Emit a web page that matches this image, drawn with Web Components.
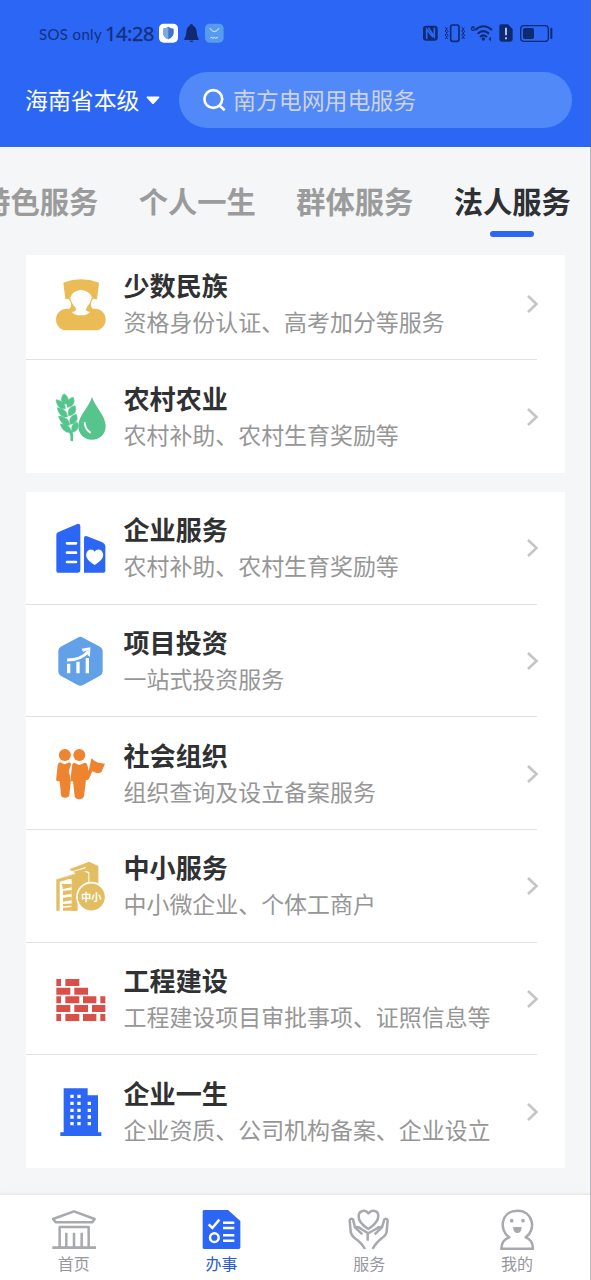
<!DOCTYPE html>
<html lang="zh-CN">
<head>
<meta charset="utf-8">
<title>办事</title>
<style>
html,body{margin:0;padding:0;height:100%;overflow:hidden;background:#f4f6f8}
body{font-family:"Noto Sans CJK SC",sans-serif}
</style>
</head>
<body>
<service-app></service-app>
<script>
const define=(name,html)=>customElements.define(name,class extends HTMLElement{
  constructor(){super();const t=document.createElement('template');t.innerHTML=typeof html==='function'?html(this):html;this.attachShadow({mode:'open'}).append(t.content.cloneNode(true));}
});

const glyphs={
minority:`<g fill="#ebbb55"><path d="M23 11Q76-9 130 11L124 61L114 60L107 52Q102 37 76 34Q50 37 46 52L39 61L29 60Z"/><rect x="1" y="89" width="149" height="65" rx="32.500"/></g><path d="M76 33Q100 35 103 54Q99 76 91 84V94Q97 99 103 99Q94 110 76 109Q57 110 49 99Q57 99 61 94V84Q52 76 47 56Q51 36 76 33Z" fill="#fff"/><path d="M43 53Q46 72 61 87L56 96L41 89Q54 79 38 58ZM109 53Q105 72 92 87L98 96L111 89Q99 79 113 58Z" fill="#ebbb55"/>`,
farm:`<g fill="#55c48d"><path d="M109 14C116 42 150 70 150 102C150 127 132 143 109 143C86 143 68 127 68 102C68 70 103 42 109 14Z"/><path stroke="#55c48d" stroke-width="1.500" d="M25 5C41 15 41 29 31 37C15 33 13 17 25 5ZM1 23C18 25 30 34 29 50C13 52 3 42 1 23ZM5 47C23 49 36 58 35 75C18 76 8 66 5 47ZM9 72C28 74 42 82 42 100C24 101 13 91 9 72ZM14 96C33 96 46 104 48 122C31 123 18 114 14 96ZM53 16C60 33 51 45 35 46C31 31 36 20 53 16ZM58 41C65 58 56 70 39 71C35 55 41 44 58 41ZM62 67C69 83 61 96 44 97C39 81 46 70 62 67ZM65 91C72 106 65 119 50 121C45 106 50 94 65 91Z"/></g><path d="M44 117Q51 130 48 147" fill="none" stroke="#55c48d" stroke-width="8"/><path d="M87 93Q89 112 103 121" fill="none" stroke="#fff" stroke-width="6" stroke-linecap="round"/>`,
company:`<g fill="#2b66f5"><path d="M2 36Q2 30 7 28L65 3Q74 0 74 10V142Q74 149 67 149H7Q2 149 2 143Z"/><path d="M85 46Q85 37 94 40L140 58Q149 62 149 70V144Q149 149 143 149H85Z"/></g><path d="M34 61H61M34 89H61M34 117H61" stroke="#fff" stroke-width="8" stroke-linecap="round"/><path d="M117 126C94 112 87 99 94 87C101 76 112 79 117 86C122 79 134 76 140 87C147 99 140 112 117 126Z" fill="#fff"/>`,
invest:`<path d="M66 5Q74 0 82 5L133 32Q141 37 141 46V106Q141 115 133 119L82 147Q74 151 66 147L15 119Q8 115 8 106V46Q8 37 15 32Z" fill="#62a1e8"/><g fill="none" stroke="#fff" stroke-width="10"><path d="M39 83V112M67 77V112M95 66V112"/><path d="M34 72Q77 72 98 46" stroke-width="9"/></g><path d="M78 38L104 34L103 62L95 57L99 43L82 47Z" fill="#fff"/>`,
group:`<g fill="#ef8430"><circle cx="27.500" cy="18" r="18"/><circle cx="71" cy="18" r="18"/><path d="M13 40L27 46L41 40Q48 42 45 50L40 64Q38 73 43 79L45 99L41 138Q39 146 29 146Q17 146 16 138L12 97H4Q0 94 2 86L6 49Q7 42 13 40Z"/><path d="M55 41L71 48L87 41Q94 42 96 52L99 66L107 29H111L113 33Q122 42 148 44L137 70Q124 76 110 67L100 89Q95 96 91 92L85 142Q82 151 71 151Q59 151 57 142L52 97H44L49 50Q50 43 55 41Z"/></g>`,
small:`<g fill="#e3bd61"><path d="M2 55L52 40L62 47V149H48V55L40 54L12 62V149H2Z"/><path d="M18 69H48V79L22 84ZM22 90L48 87V98L22 103ZM22 110L48 107V118L22 122ZM22 129L62 127V149H22V140L48 138V134L22 136Z"/><path d="M41 25L100 2L128 15V73H101V34L92 30L61 38L53 32L90 22V18L49 31Z"/><path d="M53 39L84 31L98 37V68Q84 69 75 80Q67 90 66 106V149H60V48Z"/></g><path d="M2 55L48 44" stroke="#fff" stroke-width="2" opacity=".4"/><circle cx="107" cy="108" r="43" fill="#e3bd61" stroke="#fff" stroke-width="5"/><text x="107" y="119" text-anchor="middle" fill="#fff" font-size="31" font-weight="700" font-family="Noto Sans CJK SC">中小</text>`,
bricks:`<path fill="#db4f49" d="${[[15,[[2,16],[29,71]]],[41,[[2,44],[56,97]]],[67,[[2,16],[29,71],[82,122],[134,149]]],[93,[[2,44],[56,97],[109,149]]],[120,[[2,16],[29,71],[82,122],[134,149]]]].map(([y,r])=>r.map(([a,b])=>`M${a} ${y}H${b}v21H${a}Z`).join('')).join('')}"/>`,
tower:`<path fill="#2b66f5" d="M24 4H96V25H127V136H137V147H14V136H24Z"/><path fill="#fff" d="${[[44,23],[65,23],[44,44],[65,44],[96,44],[44,65],[65,65],[96,65],[44,85],[65,85],[96,85],[44,105],[65,105],[96,105]].map(([x,y])=>`M${x} ${y}h10v10h-10Z`).join('')}"/>`
};

const navGlyphs={
home:`<g fill="none" stroke="#a7a9ae" stroke-width="7.500" stroke-linejoin="round"><path d="M66 4L128 27L121 37H11L3 27Z"/><path d="M23 112V51H110V112M43 68V112M66 68V112M89 68V112"/><path d="M1 113H132" stroke-width="8"/></g>`,
work:`<path d="M12 0H84L121 33V112Q121 117 116 117H12Q8 117 8 112V5Q8 0 12 0Z" fill="#2b66f5"/><g fill="none" stroke="#fff" stroke-width="7.500"><path d="M26 43L37 54L58 29M69 38H103M69 54H103M69 76H103M69 92H103"/><circle cx="43" cy="83" r="13"/></g>`,
care:`<g fill="none" stroke="#a7a9ae" stroke-width="7.500" stroke-linejoin="round" stroke-linecap="butt"><path d="M64 57C42 43 34 30 35 18C36 0 56-2 64 10C74-2 94 0 94 18C94 30 85 43 64 57Z"/><path d="M54 117Q45 100 23 84Q11 75 11 64L8 31Q10 24 18 28L24 52L46 73M25 52Q33 49 43 57L62 69V92M77 117Q85 100 105 84Q119 75 119 64L122 31Q119 24 112 28L105 52L83 73M104 52Q96 49 87 57L65 69"/></g>`,
me:`<path d="M43 82C11 62 17 2 67 2C116 2 124 61 92 82Q114 90 114 116H19Q20 89 43 82Z" fill="none" stroke="#a7a9ae" stroke-width="7.500" stroke-linejoin="round"/><g fill="#a7a9ae"><circle cx="50" cy="32" r="5.500"/><circle cx="84" cy="32" r="5.500"/><path d="M54 51H80Q79 69 67 69Q55 69 54 51Z"/></g>`
};

define('status-bar',`<style>
:host{display:flex;align-items:center;height:67px;padding:0 38px 0 39px;color:#14307e;font-family:Lato,sans-serif;white-space:nowrap}
.sos{font-size:15px;width:66px;letter-spacing:.35px}.time{font:20px/24px "Noto Sans",sans-serif;width:54px;letter-spacing:-.45px;-webkit-text-stroke:.3px #14307e}
.right{margin-left:auto}svg{display:block;margin-top:-2px}
</style><span class="sos">SOS only</span><span class="time">14:28</span>
<svg width="68" height="22" viewBox="0 0 204 66"><rect x="0" y="5" width="57" height="57" rx="14" fill="#fff"/><path d="M28 14Q36 20 44 20V35Q42 45 28 52Q14 45 12 35V20Q20 20 28 14Z" fill="#3f72cb"/><path d="M28 14V52Q14 45 12 35V20Q20 20 28 14Z" fill="#7fa8e6"/><path d="M97 6Q102 6 102 11Q113 16 113 30Q113 44 119 50V54H76V50Q82 44 82 30Q82 16 92 11Q92 6 97 6ZM91 56H104Q98 64 91 56Z" fill="#11296e"/><rect x="138" y="5" width="56" height="57" rx="14" fill="#579bee"/><path d="M152 18Q166 40 181 18M154 48L158 46L162 49L166 46L170 49L176 46" stroke="#e0efff" stroke-width="3" fill="none"/></svg>
<svg class="right" width="131" height="22" viewBox="0 0 393 66"><g fill="none" stroke="#102a72" stroke-width="5"><rect x="3" y="11" width="44" height="45" rx="9" fill="#102a72" stroke="none"/><path d="M14 51V22L33 46M19 17L37 44V17" stroke="#2b66f5" stroke-width="5"/><rect x="86" y="9" width="25" height="49" rx="6"/><path d="M69 16L75 21L69 27L75 33L69 39L75 45L69 51M77 17L73 22L78 28L73 34L78 40L73 46L78 51M119 16L125 21L119 27L125 33L119 39L125 45L119 51M127 17L123 22L128 28L123 34L128 40L123 46L128 51" stroke-width="3"/><path d="M160 24Q184 2 210 24M167 35Q184 20 201 35M174 45Q184 35 195 45" stroke-width="6"/><circle cx="184" cy="51" r="5" fill="#102a72" stroke="none"/><path d="M207 44L200 51L207 58ZM211 46v10" fill="#102a72" stroke="none"/><path d="M237 7H258L272 21V52Q272 59 265 59H239Q232 59 232 52V12Q232 7 237 7Z" fill="#102a72" stroke="none"/><path d="M252 17V40M252 46V52" stroke="#cfdbff"/><rect x="296" y="11" width="83" height="47" rx="10" stroke-width="4"/><rect x="303" y="18" width="33" height="33" rx="5" fill="#102a72" stroke="none"/><path d="M388 20V48" stroke-width="6" stroke-linecap="round"/></g><text x="146" y="28" font-family="Noto Sans" font-weight="700" font-size="23" fill="#102a72">6</text></svg>`);

define('search-box',`<style>
:host{display:flex;align-items:center;width:393px;height:56px;border-radius:28px;background:#5189f8;box-sizing:border-box;padding:0 0 0 24px;color:#cdd2e0;font-size:22.900px;line-height:34px}
svg{margin-right:7px}
span{margin-top:-2px}
</style><svg width="23" height="24" viewBox="0 0 23 24"><g fill="none" stroke="#fff" stroke-width="2.600"><circle cx="10.300" cy="11" r="8.900"/><path d="M16.500 17.500L21.700 22.300"/></g></svg><span><slot></slot></span>`);

define('app-header',`<style>
:host{display:block;height:147px;background:#2b66f5;color:#fff}
.bar{display:flex;align-items:center;padding:5px 19px 0 25px}
.place{font-size:22.900px;line-height:34px;white-space:nowrap;width:121px;margin-top:-2px}
search-box{margin-left:auto}
</style><status-bar></status-bar><div class="bar"><span class="place">海南省本级</span><svg width="14" height="9" viewBox="0 0 14 9"><path d="M1 .5H13Q14 1 13 2L8 7.500Q7 8.500 6 7.500L1 2Q0 1 1 .5Z" fill="#fff"/></svg><search-box>南方电网用电服务</search-box></div>`);

define('tab-item',`<style>
:host{display:flex;flex-direction:column;align-items:center;flex:none;font-size:29.300px;line-height:44px;font-weight:700;color:#9b9b9b;white-space:nowrap}
:host([active]){color:#2f3033}
i{width:44px;height:6px;border-radius:3px;margin-top:9px}
:host([active]) i{background:#2b66f5}
</style><slot></slot><i></i>`);

define('tab-strip',`<style>
:host{display:flex;justify-content:flex-end;gap:40.300px;height:108px;padding:31px 20.200px 0 0;box-sizing:border-box;overflow:hidden}
</style><slot></slot>`);

define('service-card',`<style>:host{display:block;background:#fff;margin:0 26px 19px}</style><slot></slot>`);

define('service-row',el=>`<style>
:host{display:flex;align-items:center;height:112.700px;box-sizing:border-box;padding:0 26px 0 29.500px;position:relative}
:host(:not(:last-child))::after{content:"";position:absolute;left:0;right:28px;bottom:0;height:1px;background:#e1e2e4}
.icon{margin-right:18px;flex:none;overflow:visible}
.text{flex:1;white-space:nowrap;margin-top:-4px}
h3{margin:0;font-size:26.100px;line-height:38px;font-weight:700;color:#303133}
p{margin:0;font-size:22.950px;line-height:34px;color:#969696}
</style><svg class="icon" width="50" height="50" viewBox="1 0 150 150">${glyphs[el.getAttribute('icon')]}</svg>
<div class="text"><h3>${el.getAttribute('name')}</h3><p><slot></slot></p></div>
<svg width="13" height="20" viewBox="0 0 13 20"><path d="M2 2L10.500 10L2 18" fill="none" stroke="#c5c5c7" stroke-width="2.600"/></svg>`);

define('nav-item',el=>`<style>
:host{flex:1;display:flex;flex-direction:column;align-items:center;font-size:16px;line-height:24px;color:#96989d}
:host([active]){color:#295bd2}
svg{overflow:visible;margin-bottom:1px}
</style><svg width="44" height="40" viewBox="0 0 132 120">${navGlyphs[el.getAttribute('icon')]}</svg><slot></slot>`);

define('bottom-nav',`<style>
:host{display:flex;height:85px;box-sizing:border-box;padding-top:15px;background:#fff;box-shadow:0 -1px 2px #e2e3e4,0 -5px 8px #f4f4f4;position:relative}
</style><slot></slot>`);

define('service-app',`<style>
:host{display:flex;flex-direction:column;height:1280px;width:591px;overflow:hidden;position:relative;background:#f4f6f8}
:host::after{content:"";position:absolute;right:0;top:0;bottom:0;width:1px;background:rgba(90,95,105,.4)}
main{flex:1;min-height:0;overflow:hidden}
.scroll{margin-top:-7.400px}
</style>
<app-header></app-header>
<tab-strip><tab-item>特色服务</tab-item><tab-item>个人一生</tab-item><tab-item>群体服务</tab-item><tab-item active>法人服务</tab-item></tab-strip>
<main><div class="scroll">
<service-card><service-row icon="minority" name="少数民族">资格身份认证、高考加分等服务</service-row><service-row icon="farm" name="农村农业">农村补助、农村生育奖励等</service-row></service-card>
<service-card><service-row icon="company" name="企业服务">农村补助、农村生育奖励等</service-row><service-row icon="invest" name="项目投资">一站式投资服务</service-row><service-row icon="group" name="社会组织">组织查询及设立备案服务</service-row><service-row icon="small" name="中小服务">中小微企业、个体工商户</service-row><service-row icon="bricks" name="工程建设">工程建设项目审批事项、证照信息等</service-row><service-row icon="tower" name="企业一生">企业资质、公司机构备案、企业设立</service-row></service-card>
</div></main>
<bottom-nav><nav-item icon="home">首页</nav-item><nav-item icon="work" active>办事</nav-item><nav-item icon="care">服务</nav-item><nav-item icon="me">我的</nav-item></bottom-nav>`);
</script>
</body>
</html>
